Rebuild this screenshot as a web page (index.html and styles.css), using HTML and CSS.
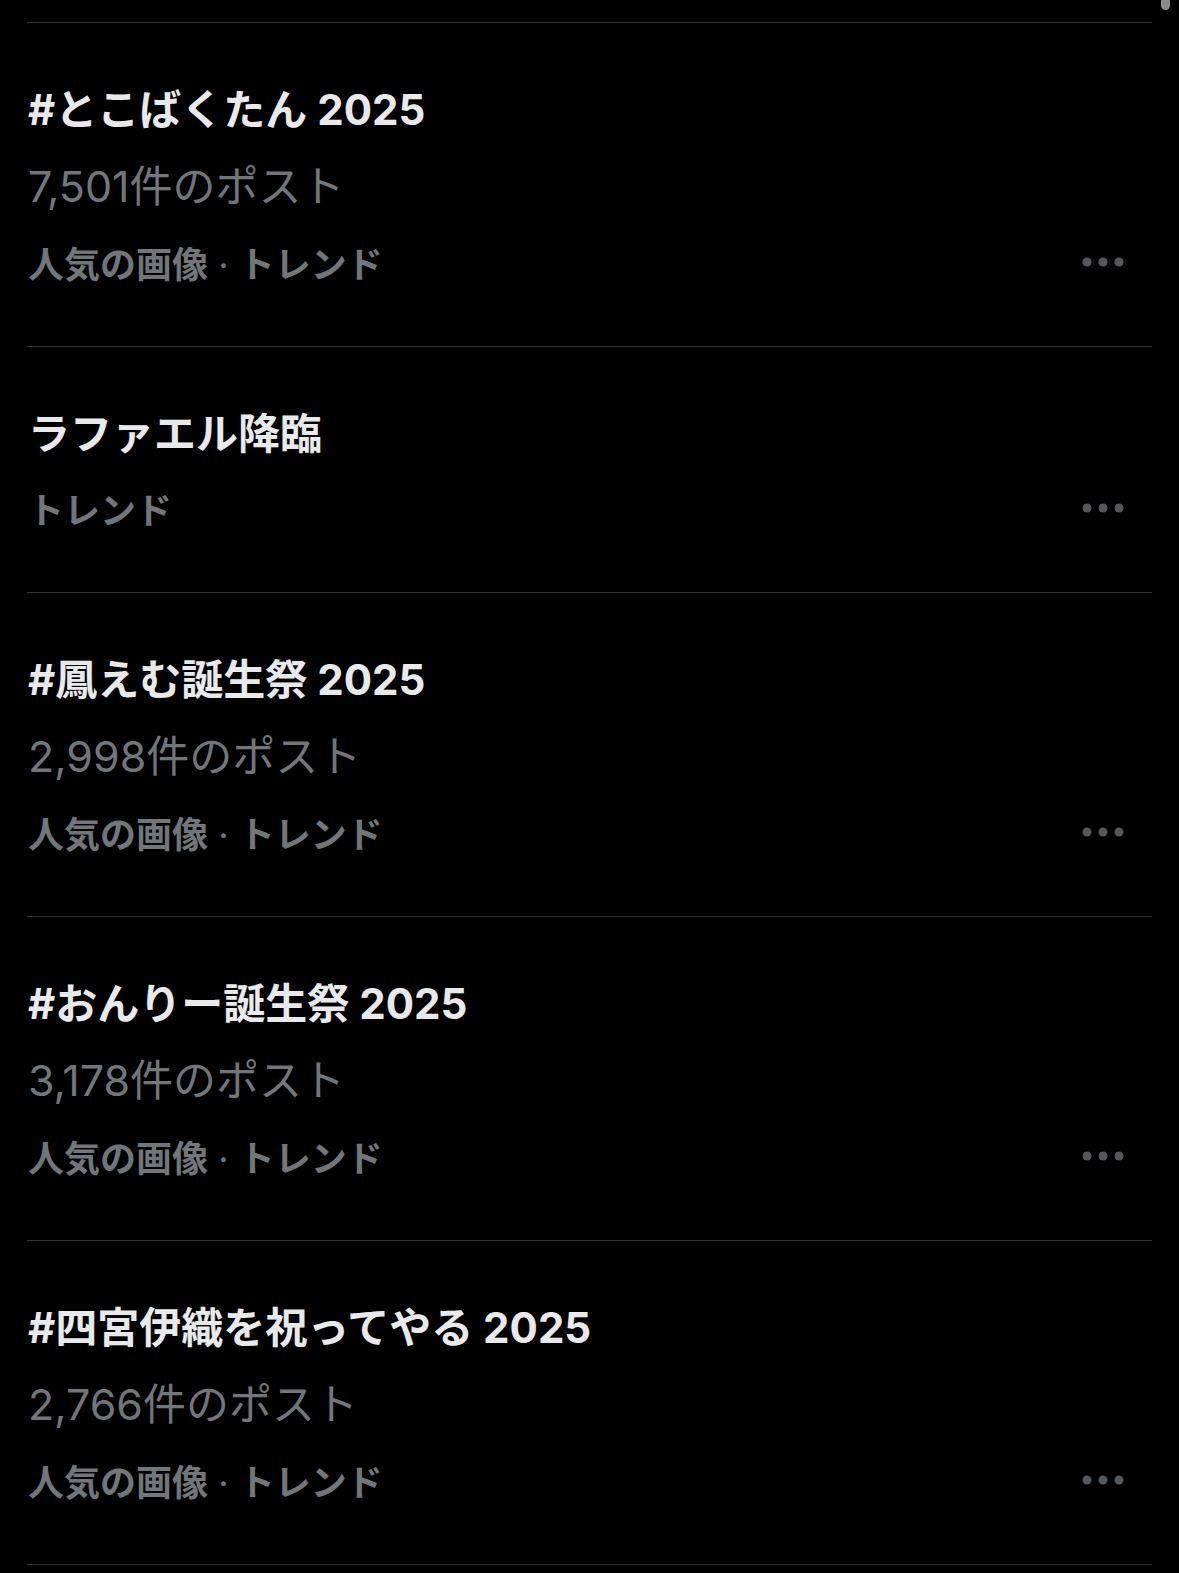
FILE: index.html
```html
<!DOCTYPE html>
<html lang="ja">
<head>
    <meta charset="UTF-8">
    <meta name="viewport" content="width=device-width, initial-scale=1.0">
    <title>トレンド</title>
    <link rel="stylesheet" href="styles.css">
</head>
<body>

<div class="scroll-thumb"></div>

<div class="trends">
    <div class="trend-tail"></div>

    <div class="trend">
        <div class="trend-title">#とこばくたん 2025</div>
        <div class="trend-count">7,501件のポスト</div>
        <div class="trend-meta">
            <span>人気の画像<span class="sep"> · </span>トレンド</span>
            <button class="more" aria-label="その他">
                <svg viewBox="0 0 42 10" width="42" height="10"><circle cx="5" cy="5" r="4.5"/><circle cx="21" cy="5" r="4.5"/><circle cx="37" cy="5" r="4.5"/></svg>
            </button>
        </div>
    </div>

    <div class="trend">
        <div class="trend-title">ラファエル降臨</div>
        <div class="trend-meta">
            <span>トレンド</span>
            <button class="more" aria-label="その他">
                <svg viewBox="0 0 42 10" width="42" height="10"><circle cx="5" cy="5" r="4.5"/><circle cx="21" cy="5" r="4.5"/><circle cx="37" cy="5" r="4.5"/></svg>
            </button>
        </div>
    </div>

    <div class="trend">
        <div class="trend-title">#鳳えむ誕生祭 2025</div>
        <div class="trend-count">2,998件のポスト</div>
        <div class="trend-meta">
            <span>人気の画像<span class="sep"> · </span>トレンド</span>
            <button class="more" aria-label="その他">
                <svg viewBox="0 0 42 10" width="42" height="10"><circle cx="5" cy="5" r="4.5"/><circle cx="21" cy="5" r="4.5"/><circle cx="37" cy="5" r="4.5"/></svg>
            </button>
        </div>
    </div>

    <div class="trend">
        <div class="trend-title">#おんりー誕生祭 2025</div>
        <div class="trend-count">3,178件のポスト</div>
        <div class="trend-meta">
            <span>人気の画像<span class="sep"> · </span>トレンド</span>
            <button class="more" aria-label="その他">
                <svg viewBox="0 0 42 10" width="42" height="10"><circle cx="5" cy="5" r="4.5"/><circle cx="21" cy="5" r="4.5"/><circle cx="37" cy="5" r="4.5"/></svg>
            </button>
        </div>
    </div>

    <div class="trend">
        <div class="trend-title">#四宮伊織を祝ってやる 2025</div>
        <div class="trend-count">2,766件のポスト</div>
        <div class="trend-meta">
            <span>人気の画像<span class="sep"> · </span>トレンド</span>
            <button class="more" aria-label="その他">
                <svg viewBox="0 0 42 10" width="42" height="10"><circle cx="5" cy="5" r="4.5"/><circle cx="21" cy="5" r="4.5"/><circle cx="37" cy="5" r="4.5"/></svg>
            </button>
        </div>
    </div>

    <div class="trend trend-last"></div>
</div>

</body>
</html>
```

FILE: styles.css
```css
/* Global */
html, body {
    height: 100%;
    overflow: hidden;
}

body {
    margin: 0;
    background: #000;
    color: #e7e9ea;
    font-family: Inter, "Noto Sans CJK JP", sans-serif;
}

/* Scroll indicator at the top right */
.scroll-thumb {
    position: absolute;
    top: -10px;
    right: 9px;
    width: 9px;
    height: 20px;
    border-radius: 5px;
    background: #8b8b8b;
}

/* Trend list */
.trends {
    padding: 0 27px;
}

.trend-tail {
    height: 22px;
}

.trend {
    border-top: 1px solid #2f3336;
    padding: 50px 0 47px 1px;
}

.trend-last {
    padding: 0;
    height: 20px;
}

.trend-title {
    font-size: 42px;
    font-weight: 700;
    line-height: 74px;
    color: #e7e9ea;
}

.trend-count {
    font-size: 43px;
    font-weight: 400;
    line-height: 78px;
    color: #71767b;
}

.trend-meta {
    display: flex;
    align-items: center;
    justify-content: space-between;
    height: 74px;
    font-size: 36px;
    font-weight: 700;
    color: #71767b;
}

.sep {
    font-weight: 400;
}

.more {
    display: flex;
    padding: 0;
    margin-right: 28px;
    border: none;
    background: none;
    fill: #53585c;
    cursor: pointer;
}
```
